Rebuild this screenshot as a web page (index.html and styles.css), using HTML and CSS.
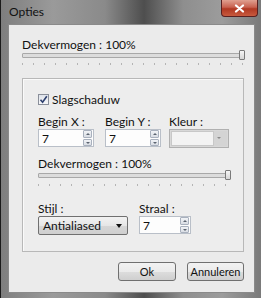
FILE: index.html
```html
<!DOCTYPE html>
<html>
<head>
<meta charset="utf-8">
<link rel="stylesheet" href="styles.css">
</head>
<body>
<div class="window">
  <div class="titlebar">
    <span class="title">Opties</span>
    <div class="close"><svg width="11" height="9" viewBox="0 0 11 9"><path d="M2 1.5 L9 7.5 M9 1.5 L2 7.5" stroke="#fff" stroke-width="2.2" stroke-linecap="round"/></svg></div>
  </div>
  <div class="client">
    <div class="top-slider">
      <div class="label">Dekvermogen : 100%</div>
      <div class="slider"><div class="track"></div><div class="thumb"></div></div>
      <div class="ticks"></div>
    </div>
    <div class="group">
      <label class="check"><span class="box"><svg width="9" height="9" viewBox="0 0 9 9"><path d="M1.5 4.8 L3.6 7.2 L7.8 1.2" stroke="#2d3f6e" stroke-width="1.6" fill="none"/></svg></span>Slagschaduw</label>
      <div class="row three">
        <div class="field">
          <div class="label">Begin X :</div>
          <div class="spin"><span class="val">7</span><span class="arrows"><i class="up"></i><i class="down"></i></span></div>
        </div>
        <div class="field">
          <div class="label">Begin Y :</div>
          <div class="spin"><span class="val">7</span><span class="arrows"><i class="up"></i><i class="down"></i></span></div>
        </div>
        <div class="field">
          <div class="label">Kleur :</div>
          <div class="combo"><span class="cval"></span><span class="cbtn"><i class="down"></i></span></div>
        </div>
      </div>
      <div class="inner-slider">
        <div class="label">Dekvermogen : 100%</div>
        <div class="slider"><div class="track"></div><div class="thumb"></div></div>
        <div class="ticks"></div>
      </div>
      <div class="row two">
        <div class="field">
          <div class="label">Stijl :</div>
          <div class="select">Antialiased<span class="sarrow"></span></div>
        </div>
        <div class="field">
          <div class="label">Straal :</div>
          <div class="spin small"><span class="val">7</span><span class="arrows"><i class="up"></i><i class="down"></i></span></div>
        </div>
      </div>
    </div>
    <div class="buttons">
      <button class="btn">Ok</button>
      <button class="btn">Annuleren</button>
    </div>
  </div>
</div>
</body>
</html>
```

FILE: styles.css
```css
* { box-sizing: border-box; }
html, body { margin: 0; padding: 0; }
body {
  width: 261px; height: 298px; overflow: hidden;
  background: #2a2a2a;
  font-family: Lato, "Liberation Sans", sans-serif;
  font-size: 12px; color: #111;
}
.window {
  width: 261px; height: 298px;
  padding: 0 6px 5px 2px;
  display: flex; flex-direction: column;
  background: linear-gradient(90deg, #7e7e7e 0%, #9a9a9a 20%, #8a8a8a 40%, #4e4e4e 55%, #8e8e8e 70%, #9c9c9c 85%, #7a7a7a 100%);
  border-left: 1px solid #1a1a1a;
}
.titlebar {
  height: 24px; flex: none;
  position: relative;
  display: flex; align-items: center;
  padding-left: 6px;
}
.title { font-size: 12px; color: #111; margin-top: -1px; }
.close {
  position: absolute; right: -3px; top: 0;
  width: 37px; height: 17px;
  border: 1px solid #5a2020; border-top: none;
  border-radius: 0 0 4px 4px;
  background: linear-gradient(#e0a090 0%, #c8614f 45%, #b03822 55%, #c85a3e 100%);
  display: flex; align-items: center; justify-content: center;
}
.client {
  flex: 1;
  margin-left: 5px;
  background: #ebebeb;
  border: 1px solid #8a8a8a;
  display: flex; flex-direction: column;
  padding: 0 11px 0 13px;
}
.label { line-height: 14px; height: 14px; white-space: nowrap; }
.top-slider { padding-top: 13px; }
.slider { position: relative; height: 10px; margin-top: -2px; }
.track {
  position: absolute; left: 0; right: 0; top: 3px; height: 5px;
  background: #dcdcdc; border: 1px solid #a8a8a8; border-radius: 1px;
}
.thumb {
  position: absolute; right: -2px; top: 0; width: 6px; height: 10px;
  background: linear-gradient(#f6f6f6, #d6d6d6); border: 1px solid #7a7a7a; border-radius: 1px;
}
.ticks {
  height: 2px; margin-top: 3px;
  background: repeating-linear-gradient(90deg, #b4b4b4 0 1px, transparent 1px 11px);
}
.group {
  margin-top: 13px;
  width: 222px; height: 174px;
  border: 1px solid #b8b8b8;
  box-shadow: inset 1px 1px 0 #fafafa;
  background: #ededed;
  padding: 14px 0 0 15px;
  display: flex; flex-direction: column;
}
.check { display: flex; align-items: center; height: 12px; gap: 3px; }
.box {
  width: 11px; height: 11px; border: 1px solid #8a8f9a;
  background: linear-gradient(#dfe3ea, #f6f7f9);
  display: flex; align-items: center; justify-content: center;
}
.row { display: grid; }
.three { margin-top: 10px; grid-template-columns: 67px 64px 60px; }
.two { margin-top: 16px; grid-template-columns: 101px 52px; }
.spin {
  width: 56px; height: 18px;
  background: #fdfdfd; border: 1px solid #b9bfc8;
  display: flex; align-items: center; justify-content: space-between;
  padding-left: 3px;
}
.spin.small { width: 52px; }
.val { font-size: 12px; }
.arrows { display: flex; flex-direction: column; width: 9px; height: 16px; margin-right: 1px; gap: 1px; }
.arrows i {
  flex: 1; border: 1px solid #a9b1be; border-radius: 1px;
  background: linear-gradient(#f1f3f6, #d9dde4);
  position: relative;
}
.arrows i::after, .cbtn i::after {
  content: ""; position: absolute; left: 2px; top: 2px;
  border-left: 2px solid transparent; border-right: 2px solid transparent;
}
.arrows i.up::after { border-bottom: 2px solid #5c6470; }
.arrows i.down::after { border-top: 2px solid #5c6470; }
.combo {
  width: 60px; height: 19px;
  border: 1px solid #b0b0b0; background: #d8d8d8;
  display: flex; padding: 1px;
}
.cval { flex: 1; background: #f3f3f3; border: 1px solid #c8c8c8; }
.cbtn { width: 13px; position: relative; background: #d4d4d4; }
.cbtn i { position: absolute; left: 3px; top: 6px; }
.cbtn i::after { border-top: 2px solid #8a8a8a; left: 0; top: 0; }
.inner-slider { margin-top: 9px; width: 191px; }
.inner-slider .slider { margin-top: -1px; }
.inner-slider .ticks { margin-top: 4px; }
.select {
  width: 90px; height: 19px;
  border: 1px solid #707070; border-radius: 2px;
  background: linear-gradient(#f2f2f2 0%, #e6e6e6 50%, #d6d6d6 51%, #cfcfcf 100%);
  padding-left: 4px; line-height: 17px;
  position: relative;
}
.sarrow {
  position: absolute; right: 5px; top: 7px;
  border-left: 3px solid transparent; border-right: 3px solid transparent;
  border-top: 4px solid #111;
}
.buttons {
  margin-top: 10px;
  display: flex; justify-content: flex-end; gap: 11px;
  margin-right: -1px;
}
.btn {
  height: 19px; width: 58px;
  font-family: inherit; font-size: 11px; color: #111;
  border: 1px solid #707070; border-radius: 3px;
  background: linear-gradient(#f2f2f2 0%, #ebebeb 50%, #dddddd 51%, #cfcfcf 100%);
  padding: 0; line-height: 16px;
}
.btn + .btn { width: 57px; }
```
